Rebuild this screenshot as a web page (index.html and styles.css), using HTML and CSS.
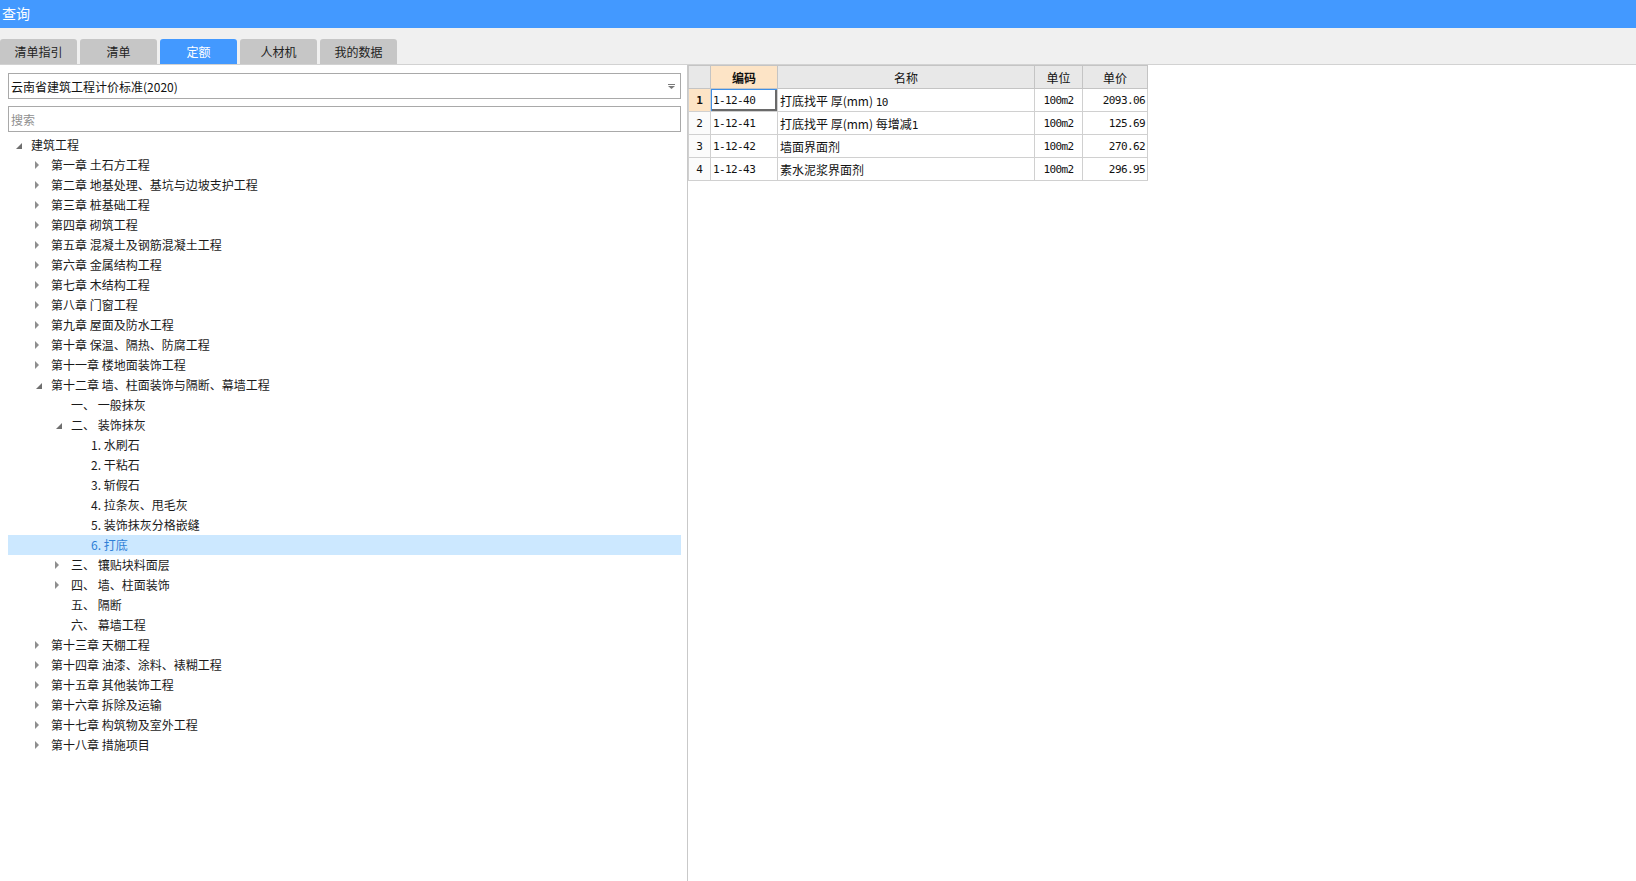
FILE: index.html
```html
<!DOCTYPE html>
<html lang="zh-CN">
<head>
<meta charset="utf-8">
<title>查询</title>
<link rel="stylesheet" href="styles.css">
</head>
<body>
<div class="app">
  <header class="titlebar">查询</header>
  <nav class="tabstrip">
    <div class="tab">清单指引</div>
    <div class="tab">清单</div>
    <div class="tab active">定额</div>
    <div class="tab">人材机</div>
    <div class="tab">我的数据</div>
  </nav>
  <main class="main">
    <section class="left">
      <div class="select">
        <span class="select-text">云南省建筑工程计价标准(2020)</span>
        <svg class="caret" width="7" height="5" viewBox="0 0 7 5"><rect x="0" y="0" width="7" height="1" fill="#7a7a7a"/><polygon points="0,2 7,2 3.5,5" fill="#7a7a7a"/></svg>
      </div>
      <div class="search">搜索</div>
      <ul class="tree">
        <li class="row l0"><span class="tw exp"></span><span class="tx">建筑工程</span></li>
        <li class="row l1"><span class="tw col"></span><span class="tx">第一章 土石方工程</span></li>
        <li class="row l1"><span class="tw col"></span><span class="tx">第二章 地基处理、基坑与边坡支护工程</span></li>
        <li class="row l1"><span class="tw col"></span><span class="tx">第三章 桩基础工程</span></li>
        <li class="row l1"><span class="tw col"></span><span class="tx">第四章 砌筑工程</span></li>
        <li class="row l1"><span class="tw col"></span><span class="tx">第五章 混凝土及钢筋混凝土工程</span></li>
        <li class="row l1"><span class="tw col"></span><span class="tx">第六章 金属结构工程</span></li>
        <li class="row l1"><span class="tw col"></span><span class="tx">第七章 木结构工程</span></li>
        <li class="row l1"><span class="tw col"></span><span class="tx">第八章 门窗工程</span></li>
        <li class="row l1"><span class="tw col"></span><span class="tx">第九章 屋面及防水工程</span></li>
        <li class="row l1"><span class="tw col"></span><span class="tx">第十章 保温、隔热、防腐工程</span></li>
        <li class="row l1"><span class="tw col"></span><span class="tx">第十一章 楼地面装饰工程</span></li>
        <li class="row l1"><span class="tw exp"></span><span class="tx">第十二章 墙、柱面装饰与隔断、幕墙工程</span></li>
        <li class="row l2"><span class="tw"></span><span class="tx">一、 一般抹灰</span></li>
        <li class="row l2"><span class="tw exp"></span><span class="tx">二、 装饰抹灰</span></li>
        <li class="row l3"><span class="tw"></span><span class="tx">1. 水刷石</span></li>
        <li class="row l3"><span class="tw"></span><span class="tx">2. 干粘石</span></li>
        <li class="row l3"><span class="tw"></span><span class="tx">3. 斩假石</span></li>
        <li class="row l3"><span class="tw"></span><span class="tx">4. 拉条灰、甩毛灰</span></li>
        <li class="row l3"><span class="tw"></span><span class="tx">5. 装饰抹灰分格嵌缝</span></li>
        <li class="row l3 selected"><span class="tw"></span><span class="tx">6. 打底</span></li>
        <li class="row l2"><span class="tw col"></span><span class="tx">三、 镶贴块料面层</span></li>
        <li class="row l2"><span class="tw col"></span><span class="tx">四、 墙、柱面装饰</span></li>
        <li class="row l2"><span class="tw"></span><span class="tx">五、 隔断</span></li>
        <li class="row l2"><span class="tw"></span><span class="tx">六、 幕墙工程</span></li>
        <li class="row l1"><span class="tw col"></span><span class="tx">第十三章 天棚工程</span></li>
        <li class="row l1"><span class="tw col"></span><span class="tx">第十四章 油漆、涂料、裱糊工程</span></li>
        <li class="row l1"><span class="tw col"></span><span class="tx">第十五章 其他装饰工程</span></li>
        <li class="row l1"><span class="tw col"></span><span class="tx">第十六章 拆除及运输</span></li>
        <li class="row l1"><span class="tw col"></span><span class="tx">第十七章 构筑物及室外工程</span></li>
        <li class="row l1"><span class="tw col"></span><span class="tx">第十八章 措施项目</span></li>
      </ul>
    </section>
    <section class="right">
      <table class="grid">
        <colgroup>
          <col class="c-no"><col class="c-code"><col class="c-name"><col class="c-unit"><col class="c-price">
        </colgroup>
        <thead>
          <tr><th class="corner"></th><th class="hl">编码</th><th>名称</th><th>单位</th><th>单价</th></tr>
        </thead>
        <tbody>
          <tr><td class="no cur">1</td><td class="code focus">1-12-40</td><td class="name">打底找平 厚(mm) <span class="num">10</span></td><td class="unit">100m2</td><td class="price">2093.06</td></tr>
          <tr><td class="no">2</td><td class="code">1-12-41</td><td class="name">打底找平 厚(mm) 每增减<span class="num">1</span></td><td class="unit">100m2</td><td class="price">125.69</td></tr>
          <tr><td class="no">3</td><td class="code">1-12-42</td><td class="name">墙面界面剂</td><td class="unit">100m2</td><td class="price">270.62</td></tr>
          <tr><td class="no">4</td><td class="code">1-12-43</td><td class="name">素水泥浆界面剂</td><td class="unit">100m2</td><td class="price">296.95</td></tr>
        </tbody>
      </table>
    </section>
  </main>
</div>
</body>
</html>
```

FILE: styles.css
```css
* { box-sizing: border-box; }
html, body {
  margin: 0;
  padding: 0;
  background: #ffffff;
}
body {
  font-family: "Noto Sans CJK SC", "Noto Sans", sans-serif;
  font-size: 12px;
  color: #1a1a1a;
}
.app {
  width: 1636px;
  height: 881px;
  display: flex;
  flex-direction: column;
  overflow: hidden;
}
.titlebar {
  height: 28px;
  flex: none;
  background: #4399ff;
  color: #ffffff;
  font-size: 14px;
  line-height: 27px;
  padding-left: 2px;
}
.tabstrip {
  height: 37px;
  flex: none;
  background: #f0f0f0;
  border-bottom: 1px solid #d2d2d2;
  display: flex;
  align-items: flex-end;
  gap: 3px;
}
.tab {
  width: 77px;
  height: 25px;
  background: #c6c6c6;
  color: #222;
  border-radius: 3px 3px 0 0;
  display: flex;
  align-items: center;
  justify-content: center;
  font-size: 12px;
}
.tab.active {
  background: #4399ff;
  color: #ffffff;
}
.main {
  flex: 1;
  display: flex;
  min-height: 0;
}
.left {
  width: 688px;
  flex: none;
  border-right: 1px solid #c9c9c9;
  padding: 8px 6px 0 8px;
}
.select {
  height: 26px;
  border: 1px solid #a9a9a9;
  display: flex;
  align-items: center;
  justify-content: space-between;
  padding: 0 5px 0 2px;
  color: #111;
}
.caret { display: block; }
.search {
  height: 26px;
  margin-top: 7px;
  border: 1px solid #a9a9a9;
  display: flex;
  align-items: center;
  padding-left: 2px;
  color: #8f8f8f;
}
.tree {
  list-style: none;
  margin: 3px 0 0 0;
  padding: 0;
}
.row {
  height: 20px;
  display: flex;
  align-items: center;
  white-space: nowrap;
}
.row.l1 { padding-left: 20px; }
.row.l2 { padding-left: 40px; }
.row.l3 { padding-left: 60px; }
.row.selected {
  background: #cce8ff;
  color: #2f7fd6;
}
.tw {
  width: 23px;
  flex: none;
  height: 20px;
  display: flex;
  align-items: center;
}
.tw.col::before {
  content: "";
  margin-left: 7px;
  border-left: 4px solid #8e8e8e;
  border-top: 4px solid transparent;
  border-bottom: 4px solid transparent;
}
.tw.exp::before {
  content: "";
  margin-left: 8px;
  margin-top: 1px;
  border-right: 6px solid #6f6f6f;
  border-top: 6px solid transparent;
}
.tx { line-height: 20px; }

.right {
  flex: 1;
  min-width: 0;
}
.grid {
  border-collapse: collapse;
  table-layout: fixed;
  width: 459px;
  font-size: 12px;
}
.c-no { width: 22px; }
.c-code { width: 67px; }
.c-name { width: 257px; }
.c-unit { width: 48px; }
.c-price { width: 65px; }
.grid th, .grid td {
  border: 1px solid #d0d0d0;
  height: 23px;
  padding: 0 2px;
  white-space: nowrap;
  overflow: hidden;
}
.grid th {
  background: #e8e8e8;
  border-color: #c4c4c4;
  font-weight: normal;
  text-align: center;
  color: #111;
}
.grid th.hl {
  background: #fde4c6;
  font-weight: bold;
}
.grid th.corner {
  border-left-color: #c9c9c9;
}
.grid td {
  color: #111;
}
.grid td.no {
  text-align: center;
  background: #fbfbfb;
  font-family: "DejaVu Sans Mono", monospace;
  font-size: 11px;
}
.grid td.no.cur {
  background: #fde4c6;
  font-weight: bold;
}
.grid td.code,
.grid td.unit,
.grid td.price,
.num {
  font-family: "DejaVu Sans Mono", monospace;
  font-size: 11px;
  letter-spacing: -0.6px;
}
.grid td.unit { text-align: center; }
.grid td.price { text-align: right; }
.grid td.name { padding-left: 2px; }
.grid td.focus {
  box-shadow: inset 1px 1px 0 #3f8fe6, inset -2px -2px 0 #6a6a6a;
}
```
